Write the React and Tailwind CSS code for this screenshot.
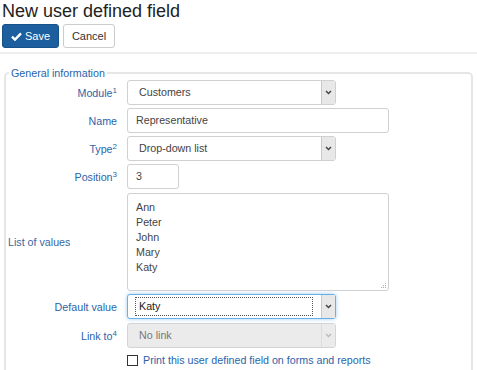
import { useState } from "react";

const font = { fontFamily: '"Liberation Sans", Arial, sans-serif' };

function Chevron({ className = "text-[#555]" }) {
  return (
    <svg width="7" height="5" viewBox="0 0 7 5" className={className}>
      <path d="M1 1 L3.5 3.5 L6 1" fill="none" stroke="currentColor" strokeWidth="1.5" />
    </svg>
  );
}

function FakeSelect({ value, focused, disabled }) {
  return (
    <div
      className={
        "flex h-[25px] w-[209px] items-stretch rounded-[3px] border " +
        (focused
          ? "border-[#66afe9] shadow-[0_0_4px_rgba(102,175,233,0.6)] bg-white"
          : disabled
          ? "border-[#d4d4d4] bg-[#ebebeb]"
          : "border-[#d0d0d0] bg-white")
      }
    >
      <div className="flex flex-1 items-center pl-[7px] pr-[8px]">
        {focused ? (
          <div className="flex h-[19px] w-full items-center border border-dotted border-[#555] pl-[3px] text-[#222]">
            {value}
          </div>
        ) : (
          <span className={"pl-[4px] " + (disabled ? "text-[#777]" : "text-[#444]")}>{value}</span>
        )}
      </div>
      <div
        className={
          "flex w-[14px] items-center justify-center border-l " +
          (disabled ? "border-[#dcdcdc] bg-[#ebebeb]" : "border-[#c8c8c8] bg-[#e8e8e8]")
        }
      >
        <Chevron className={disabled ? "text-[#bbb]" : "text-[#444]"} />
      </div>
    </div>
  );
}

function Row({ label, sup, children }) {
  return (
    <div className="flex items-start">
      <div className="w-[111px] pt-[5px] text-right text-[#2b64ab]">
        {label}
        {sup && <span className="relative top-[-4px] text-[8px]">{sup}</span>}
      </div>
      <div className="ml-[10px]">{children}</div>
    </div>
  );
}

export default function App() {
  const [print, setPrint] = useState(false);
  const values = ["Ann", "Peter", "John", "Mary", "Katy"];

  return (
    <div className="h-[370px] w-[477px] overflow-hidden bg-white text-[10.7px]" style={font}>
      <h1 className="pl-[2px] text-[18px] leading-[22px] text-[#222]">New user defined field</h1>
      <div className="mt-[2px] flex gap-[4px] pl-[2px]">
        <button className="flex h-[24px] w-[57px] items-center justify-center gap-[3px] rounded-[3px] border border-[#16528a] bg-[#1c5e9e] text-[11px] text-white">
          <svg width="11" height="9" viewBox="0 0 12 10">
            <path d="M1 5.2 L4.3 8.5 L11 1.5" fill="none" stroke="white" strokeWidth="2.6" />
          </svg>
          Save
        </button>
        <button className="h-[24px] w-[52px] rounded-[3px] border border-[#ccc] bg-white text-[11px] text-[#333]">
          Cancel
        </button>
      </div>
      <div className="mt-[4px] h-[2px] bg-[#eee]" />

      <fieldset className="ml-[4px] mr-[4px] mt-[12px] h-[400px] rounded-[5px] border-2 border-[#e6e6e6]">
        <legend className="ml-[3px] px-[2px] leading-[14px] text-[#2b64ab]">General information</legend>
        <div className="flex flex-col">
          <Row label="Module" sup="1">
            <FakeSelect value="Customers" />
          </Row>
          <div className="mt-[3px]">
            <Row label="Name">
              <div className="flex h-[25px] w-[262px] items-center rounded-[3px] border border-[#d0d0d0] pl-[8px] text-[#444]">
                Representative
              </div>
            </Row>
          </div>
          <div className="mt-[3px]">
            <Row label="Type" sup="2">
              <FakeSelect value="Drop-down list" />
            </Row>
          </div>
          <div className="mt-[3px]">
            <Row label="Position" sup="3">
              <div className="flex h-[25px] w-[52px] items-center rounded-[3px] border border-[#d0d0d0] pl-[8px] text-[#444]">
                3
              </div>
            </Row>
          </div>
          <div className="mt-[4px] flex items-center">
            <div className="w-[121px] pl-[2px] text-[#3c66a0]">List of values</div>
            <div className="relative h-[98px] w-[262px] rounded-[3px] border border-[#d0d0d0] pl-[8px] pt-[6px] leading-[15px] text-[#444]">
              {values.map((v) => (
                <div key={v}>{v}</div>
              ))}
              <svg width="6" height="6" viewBox="0 0 6 6" className="absolute bottom-[1px] right-[1px]">
                <g fill="#aaa">
                  <rect x="4" y="0" width="1" height="1" />
                  <rect x="2" y="2" width="1" height="1" />
                  <rect x="4" y="2" width="1" height="1" />
                  <rect x="0" y="4" width="1" height="1" />
                  <rect x="2" y="4" width="1" height="1" />
                  <rect x="4" y="4" width="1" height="1" />
                </g>
              </svg>
            </div>
          </div>
          <div className="mt-[3px]">
            <Row label="Default value">
              <FakeSelect value="Katy" focused />
            </Row>
          </div>
          <div className="mt-[4px]">
            <Row label="Link to" sup="4">
              <FakeSelect value="No link" disabled />
            </Row>
          </div>
          <label className="ml-[121px] mt-[4px] flex items-center gap-[5px] text-[#2b64ab]">
            <input
              type="checkbox"
              checked={print}
              onChange={(e) => setPrint(e.target.checked)}
              className="h-[11px] w-[11px] appearance-none border border-[#333] bg-white"
            />
            Print this user defined field on forms and reports
          </label>
        </div>
      </fieldset>
    </div>
  );
}
